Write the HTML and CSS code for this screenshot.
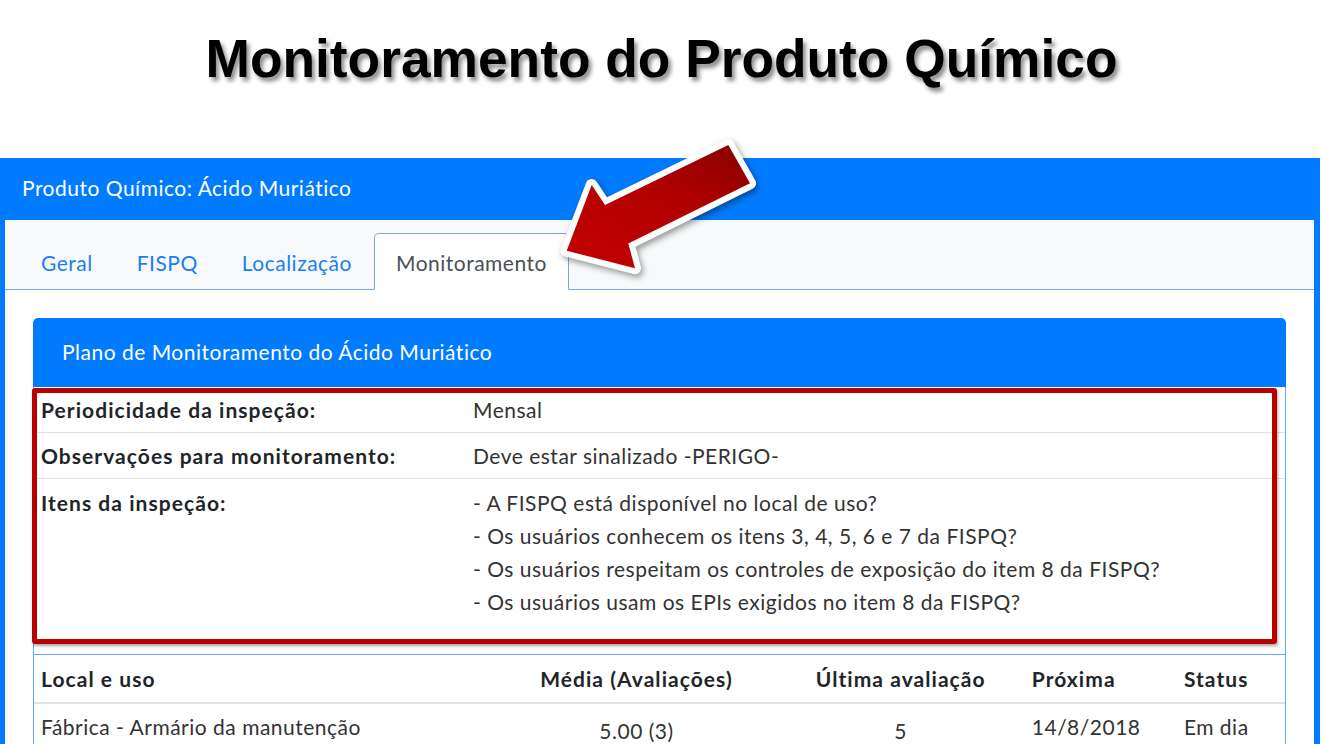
FILE: index.html
```html
<!DOCTYPE html>
<html lang="pt-BR">
<head>
<meta charset="utf-8">
<title>Monitoramento do Produto Químico</title>
<link rel="stylesheet" href="styles.css">
</head>
<body>
<h1 class="slide-title">Monitoramento do Produto Químico</h1>
<div class="outer-card">
  <div class="outer-header">Produto Químico: Ácido Muriático</div>
  <div class="outer-body">
    <ul class="tabs">
      <li class="tab">Geral</li>
      <li class="tab">FISPQ</li>
      <li class="tab">Localização</li>
      <li class="tab active">Monitoramento</li>
    </ul>
    <div class="tab-content">
      <div class="inner-card">
        <div class="inner-header">Plano de Monitoramento do Ácido Muriático</div>
        <div class="inner-body">
          <div class="plan">
            <table class="plan-table">
              <colgroup><col class="c-label"><col></colgroup>
              <tr class="r1"><td class="label">Periodicidade da inspeção:</td><td class="value">Mensal</td></tr>
              <tr class="r2"><td class="label">Observações para monitoramento:</td><td class="value">Deve estar sinalizado -PERIGO-</td></tr>
              <tr class="r3"><td class="label">Itens da inspeção:</td><td class="value">
                <ul class="items">
                  <li>- A FISPQ está disponível no local de uso?</li>
                  <li>- Os usuários conhecem os itens 3, 4, 5, 6 e 7 da FISPQ?</li>
                  <li>- Os usuários respeitam os controles de exposição do item 8 da FISPQ?</li>
                  <li>- Os usuários usam os EPIs exigidos no item 8 da FISPQ?</li>
                </ul>
              </td></tr>
            </table>
            <div class="highlight"></div>
          </div>
          <table class="loc-table">
            <colgroup><col class="w1"><col class="w2"><col class="w3"><col class="w4"><col class="w5"></colgroup>
            <thead>
              <tr><th>Local e uso</th><th class="center">Média (Avaliações)</th><th class="center">Última avaliação</th><th>Próxima</th><th>Status</th></tr>
            </thead>
            <tbody>
              <tr><td>Fábrica - Armário da manutenção</td><td class="center low">5.00 (3)</td><td class="center low">5</td><td>14/8/2018</td><td>Em dia</td></tr>
            </tbody>
          </table>
        </div>
      </div>
    </div>
  </div>
</div>
<svg class="arrow" viewBox="0 0 240 180" width="240" height="180" aria-hidden="true">
  <defs>
    <linearGradient id="ag" x1="0" y1="1" x2="1" y2="0">
      <stop offset="0" stop-color="#c40000"/>
      <stop offset="0.6" stop-color="#b00000"/>
      <stop offset="1" stop-color="#860000"/>
    </linearGradient>
  </defs>
  <polygon points="26.7,130.7 51.7,65 65,85 188.3,25 210,63.3 88.3,123.5 95,148.3" fill="url(#ag)" stroke="#ffffff" stroke-width="12" stroke-linejoin="round" paint-order="stroke"/>
</svg>
</body>
</html>
```
FILE: styles.css
```css
body {
  margin: 0;
  width: 1323px;
  height: 744px;
  overflow: hidden;
  background: #ffffff;
  font-family: Lato, "Open Sans", sans-serif;
  letter-spacing: 0.5px;
  position: relative;
}

.slide-title {
  margin: 29px 0 0;
  height: 60px;
  font: bold 53.3px/60px "Liberation Sans", Arial, sans-serif;
  letter-spacing: 0;
  text-align: center;
  color: #000;
  text-shadow: 3px 4px 4px rgba(0, 0, 0, 0.45);
}

.outer-card {
  margin-top: 69px;
  width: 1320px;
}

.outer-header {
  height: 62px;
  box-sizing: border-box;
  background: #007bff;
  color: #fff;
  font-size: 21px;
  display: flex;
  align-items: center;
  padding: 0 0 3px 22px;
}

.outer-body {
  border-left: 5px solid #007bff;
  border-right: 6px solid #007bff;
  height: 524px;
  overflow: hidden;
}

.tabs {
  list-style: none;
  margin: 0;
  padding: 13px 0 0 14px;
  height: 70px;
  box-sizing: border-box;
  background: #f8f9fa;
  border-bottom: 1px solid #7aa7e0;
  display: flex;
  align-items: flex-start;
  gap: 0;
}

.tab {
  height: 57px;
  box-sizing: border-box;
  padding: 14px 21px 0;
  line-height: 29px;
  font-size: 21px;
  border: 1px solid transparent;
  border-radius: 5px 5px 0 0;
  color: #1a7ff5;
}

.tab.active {
  background: #fff;
  border-color: #7aa7e0 #7aa7e0 #fff;
  color: #495057;
}

.tab-content {
  padding: 28px 28px 0;
}

.inner-header {
  height: 69px;
  box-sizing: border-box;
  background: #007bff;
  color: #fff;
  border-radius: 5px 5px 0 0;
  padding: 0 0 3px 29px;
  display: flex;
  align-items: center;
  font-size: 21px;
}

.inner-body {
  border-left: 1px solid #62a6ff;
  border-right: 1px solid #62a6ff;
  height: 357px;
}

.plan {
  position: relative;
}

.plan-table {
  width: 100%;
  border-collapse: collapse;
  table-layout: fixed;
  font-size: 21px;
}

.c-label {
  width: 439px;
}

.plan-table td {
  padding: 0;
  border-top: 1px solid #dee2e6;
  color: #333;
  vertical-align: middle;
}

.plan-table .r1 td {
  border-top: 0;
  height: 45px;
}

.plan-table .r2 td {
  height: 45px;
}

.plan-table .r3 td {
  height: 175px;
  vertical-align: top;
  padding-top: 7px;
  line-height: 33px;
  box-sizing: border-box;
}

.plan-table .label {
  padding-left: 7px;
  font-weight: bold;
  letter-spacing: 1.05px;
  color: #212529;
}

.items {
  list-style: none;
  margin: 0;
  padding: 0;
  line-height: 33px;
}

.highlight {
  position: absolute;
  left: -2px;
  top: 1px;
  width: 1245px;
  height: 256px;
  box-sizing: border-box;
  border: 5px solid #b80000;
  border-radius: 3px;
  box-shadow: 1px 2px 3px rgba(0, 0, 0, 0.35);
}

.loc-table {
  width: 100%;
  border-collapse: collapse;
  table-layout: fixed;
  font-size: 21px;
  border-top: 1px solid #62a6ff;
}

.w1 { width: 462px; }
.w2 { width: 280px; }
.w3 { width: 248px; }
.w4 { width: 152px; }
.w5 { width: 108px; }

.loc-table th {
  height: 47px;
  padding: 0 0 0 7px;
  text-align: left;
  font-weight: bold;
  letter-spacing: 1.05px;
  color: #212529;
  border-bottom: 2px solid #dee2e6;
  vertical-align: middle;
}

.loc-table td {
  padding: 8px 0 0 7px;
  line-height: 29px;
  color: #333;
  vertical-align: top;
}

.loc-table .center {
  text-align: center;
  padding-left: 0;
}

.loc-table td.low {
  padding-top: 12px;
}

.arrow {
  position: absolute;
  left: 540px;
  top: 120px;
  overflow: visible;
  filter: drop-shadow(2px 3px 3px rgba(0, 0, 0, 0.4));
}
```
